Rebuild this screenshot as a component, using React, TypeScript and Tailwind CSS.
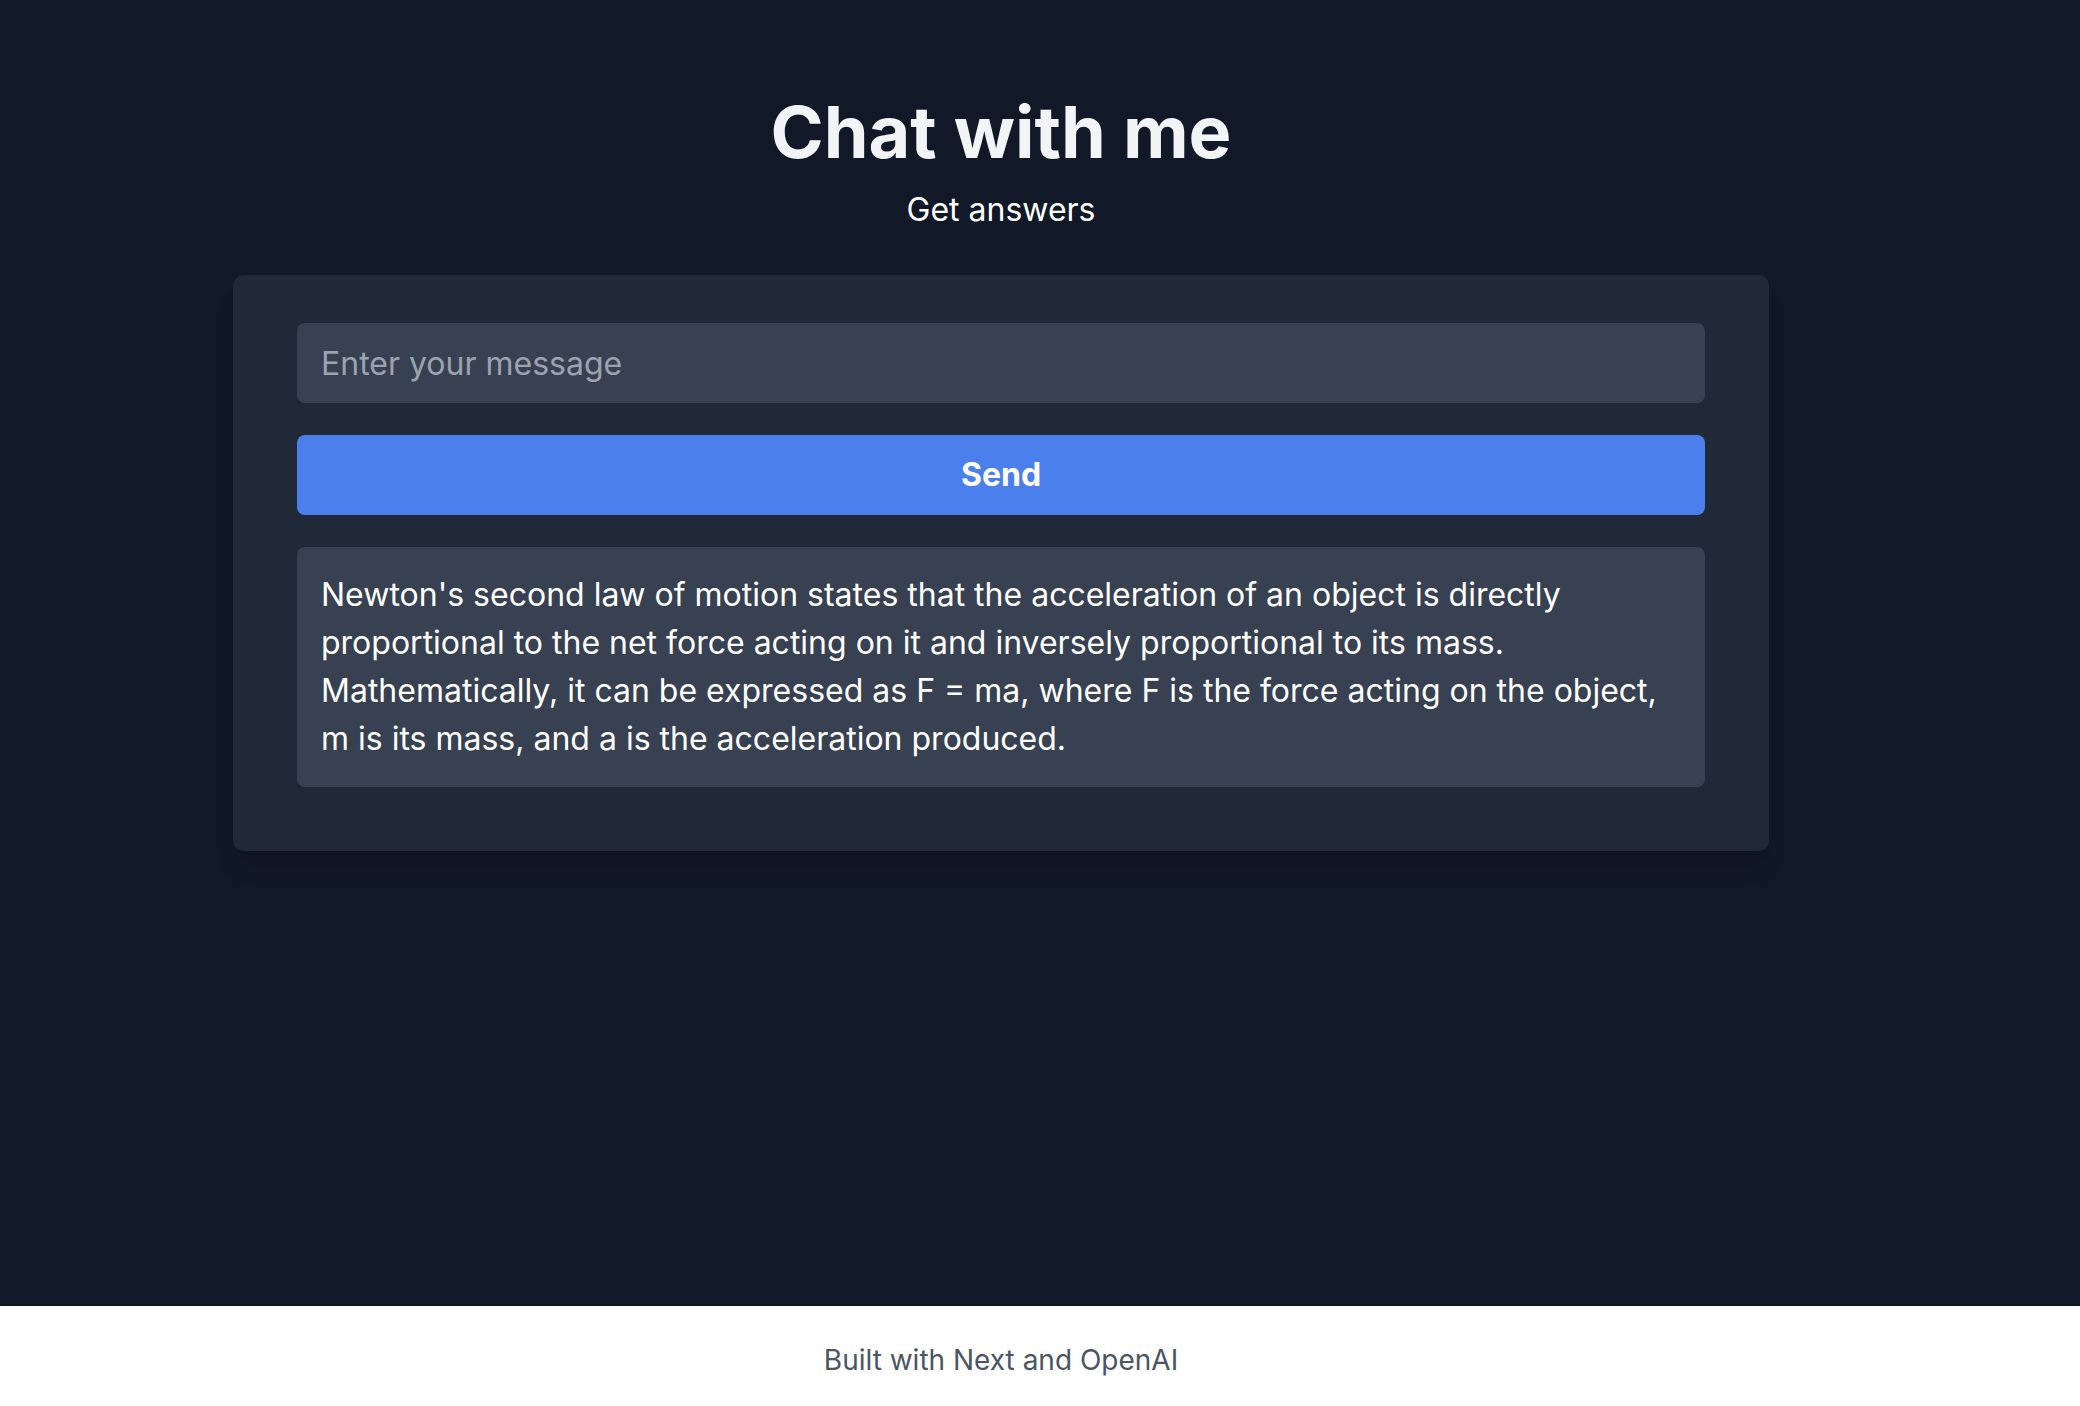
export default function App() {
  return (
    <div className="min-h-screen flex flex-col bg-[#111827]" style={{ fontFamily: "Inter, 'Noto Sans', sans-serif" }}>
      <main className="flex-1 w-[2002px] flex flex-col items-center">
        <h1 className="pt-[96px] text-[72px] leading-none font-bold text-[#f3f4f6]">Chat with me</h1>
        <p className="mt-[18px] text-[32px] leading-[48px] text-white">Get answers</p>
        <div className="mt-[41px] w-[1536px] rounded-[10px] bg-[#1f2937] px-16 pt-12 pb-16 shadow-xl">
          <input
            className="w-full h-[80px] rounded-[8px] bg-[#374151] px-6 text-[32px] text-white placeholder:text-[#9ca3af] outline-none"
            placeholder="Enter your message"
          />
          <button className="mt-8 w-full h-[80px] rounded-[8px] bg-[#4b80ec] text-[32px] font-bold text-white">Send</button>
          <div className="mt-8 rounded-[8px] bg-[#374151] p-6 text-[32px] leading-[48px] text-white">
            Newton's second law of motion states that the acceleration of an object is directly proportional to the net force acting on it and inversely proportional to its mass. Mathematically, it can be expressed as F = ma, where F is the force acting on the object, m is its mass, and a is the acceleration produced.
          </div>
        </div>
      </main>
      <footer className="h-[100px] bg-white flex">
        <div className="w-[2002px] pt-2 flex items-center justify-center text-[28px] text-[#4b5563]">Built with Next and OpenAI</div>
      </footer>
    </div>
  );
}
